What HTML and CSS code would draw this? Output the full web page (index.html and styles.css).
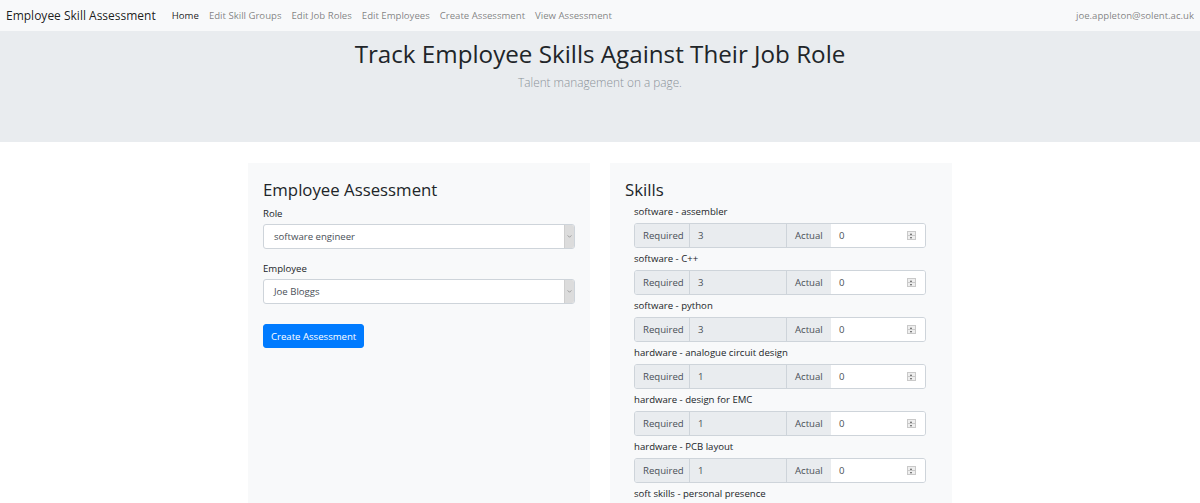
FILE: index.html
```html
<!DOCTYPE html>
<html lang="en">
<head>
<meta charset="utf-8">
<title>Employee Skill Assessment</title>
<link rel="stylesheet" href="styles.css">
</head>
<body>
<nav class="navbar">
  <a class="brand" href="#">Employee Skill Assessment</a>
  <ul class="nav-links">
    <li><a class="active" href="#">Home</a></li>
    <li><a href="#">Edit Skill Groups</a></li>
    <li><a href="#">Edit Job Roles</a></li>
    <li><a href="#">Edit Employees</a></li>
    <li><a href="#">Create Assessment</a></li>
    <li><a href="#">View Assessment</a></li>
  </ul>
  <span class="user">joe.appleton@solent.ac.uk</span>
</nav>
<header class="jumbotron">
  <h1>Track Employee Skills Against Their Job Role</h1>
  <p class="lead">Talent management on a page.</p>
</header>
<main class="content">
  <section class="card">
    <h2>Employee Assessment</h2>
    <label class="field-label">Role</label>
    <div class="select"><span class="select-value">software engineer</span><span class="select-btn"><svg width="6" height="4" viewBox="0 0 6 4"><path d="M0.5 0.5 L3 3 L5.5 0.5" fill="none" stroke="#8a8a8a" stroke-width="1"/></svg></span></div>
    <label class="field-label">Employee</label>
    <div class="select"><span class="select-value">Joe Bloggs</span><span class="select-btn"><svg width="6" height="4" viewBox="0 0 6 4"><path d="M0.5 0.5 L3 3 L5.5 0.5" fill="none" stroke="#8a8a8a" stroke-width="1"/></svg></span></div>
    <button class="btn">Create Assessment</button>
  </section>
  <section class="card">
    <h2>Skills</h2>
    <div class="skills">
      <div class="skill">
        <div class="skill-name">software - assembler</div>
        <div class="input-group"><span class="addon req">Required</span><span class="val">3</span><span class="addon act">Actual</span><span class="num">0<span class="spin"><i class="up"></i><i class="down"></i></span></span></div>
      </div>
      <div class="skill">
        <div class="skill-name">software - C++</div>
        <div class="input-group"><span class="addon req">Required</span><span class="val">3</span><span class="addon act">Actual</span><span class="num">0<span class="spin"><i class="up"></i><i class="down"></i></span></span></div>
      </div>
      <div class="skill">
        <div class="skill-name">software - python</div>
        <div class="input-group"><span class="addon req">Required</span><span class="val">3</span><span class="addon act">Actual</span><span class="num">0<span class="spin"><i class="up"></i><i class="down"></i></span></span></div>
      </div>
      <div class="skill">
        <div class="skill-name">hardware - analogue circuit design</div>
        <div class="input-group"><span class="addon req">Required</span><span class="val">1</span><span class="addon act">Actual</span><span class="num">0<span class="spin"><i class="up"></i><i class="down"></i></span></span></div>
      </div>
      <div class="skill">
        <div class="skill-name">hardware - design for EMC</div>
        <div class="input-group"><span class="addon req">Required</span><span class="val">1</span><span class="addon act">Actual</span><span class="num">0<span class="spin"><i class="up"></i><i class="down"></i></span></span></div>
      </div>
      <div class="skill">
        <div class="skill-name">hardware - PCB layout</div>
        <div class="input-group"><span class="addon req">Required</span><span class="val">1</span><span class="addon act">Actual</span><span class="num">0<span class="spin"><i class="up"></i><i class="down"></i></span></span></div>
      </div>
      <div class="skill">
        <div class="skill-name">soft skills - personal presence</div>
      </div>
    </div>
  </section>
</main>
</body>
</html>
```

FILE: styles.css
```css
* { box-sizing: border-box; }
html, body { margin: 0; padding: 0; }
body {
  font-family: "Open Sans", "Noto Sans", sans-serif;
  color: #212529;
  background: #fff;
  overflow: hidden;
  height: 503px;
}
a { text-decoration: none; }

.navbar {
  height: 31px;
  background: #f8f9fa;
  display: flex;
  align-items: center;
  padding: 0 6px;
}
.brand {
  font-size: 12px;
  color: rgba(0,0,0,0.9);
  margin-right: 11px;
}
.nav-links {
  list-style: none;
  margin: 0;
  padding: 0;
  display: flex;
  flex: 1;
}
.nav-links a {
  display: block;
  font-size: 9.6px;
  padding: 0 5px;
  color: rgba(0,0,0,0.5);
}
.nav-links a.active { color: rgba(0,0,0,0.9); }
.user {
  font-size: 9.6px;
  color: rgba(0,0,0,0.5);
}

.jumbotron {
  background: #e9ecef;
  height: 111px;
  text-align: center;
  padding-top: 7px;
}
.jumbotron h1 {
  margin: 0;
  font-size: 24.2px;
  font-weight: 400;
  line-height: 32px;
}
.lead {
  margin: 4px 0 0;
  font-size: 11.8px;
  font-weight: 300;
  color: #8c939a;
}

.content {
  display: flex;
  justify-content: center;
  gap: 20px;
  padding-top: 21px;
}
.card {
  width: 342px;
  background: #f8f9fa;
  padding: 15px 15px 0;
  height: 340px;
}
.card h2 {
  margin: 0;
  font-size: 16.8px;
  font-weight: 400;
  line-height: 24px;
}
.field-label {
  display: block;
  font-size: 9.6px;
  color: #212529;
  margin-top: 5px;
  line-height: 14px;
  margin-bottom: 3px;
}
.select {
  display: flex;
  height: 25px;
  background: #fff;
  border: 1px solid #ced4da;
  border-radius: 3px;
  margin-bottom: 13px;
  overflow: hidden;
}
.select-value {
  flex: 1;
  font-size: 9.6px;
  color: #495057;
  padding-left: 10px;
  line-height: 23px;
}
.select-btn {
  width: 10px;
  background: #dcdcdc;
  border-left: 1px solid #cfcfcf;
  display: flex;
  align-items: center;
  justify-content: center;
}
.select-btn svg { width: 5px; height: 3px; }
.btn {
  display: block;
  margin-top: 20px;
  height: 24px;
  padding: 0 7px;
  background: #007bff;
  color: #fff;
  border: 1px solid #007bff;
  border-radius: 3px;
  font-family: inherit;
  font-size: 9.6px;
}

.skills { padding-left: 9px; }
.skill-name {
  font-size: 9.6px;
  line-height: 13px;
  margin-top: 3px;
  margin-bottom: 5px;
}
.input-group {
  display: flex;
  width: 292px;
  height: 25px;
  border: 1px solid #ced4da;
  border-radius: 3px;
  overflow: hidden;
  font-size: 9.6px;
  color: #495057;
  margin-bottom: 4px;
}
.input-group > span { display: flex; align-items: center; }
.addon {
  background: #e9ecef;
  padding: 0 8px 0 8px;
}
.req { width: 55px; border-right: 1px solid #ced4da; }
.val { width: 97px; background: #e9ecef; padding-left: 8px; border-right: 1px solid #ced4da; }
.act { width: 44px; }
.num {
  flex: 1;
  background: #fff;
  padding-left: 8px;
  justify-content: space-between;
}
.spin {
  display: flex;
  flex-direction: column;
  width: 9px;
  height: 9px;
  margin-right: 9px;
  border: 1px solid #c9c9c9;
  background: #eeeeee;
}
.spin i {
  flex: 1;
  display: block;
  position: relative;
}
.spin i.up { border-bottom: 1px solid #c9c9c9; }
.spin i::after {
  content: "";
  position: absolute;
  left: 2px;
  border-left: 1.5px solid transparent;
  border-right: 1.5px solid transparent;
}
.spin i.up::after { top: 1px; border-bottom: 2px solid #555; }
.spin i.down::after { top: 1px; border-top: 2px solid #555; }
```
